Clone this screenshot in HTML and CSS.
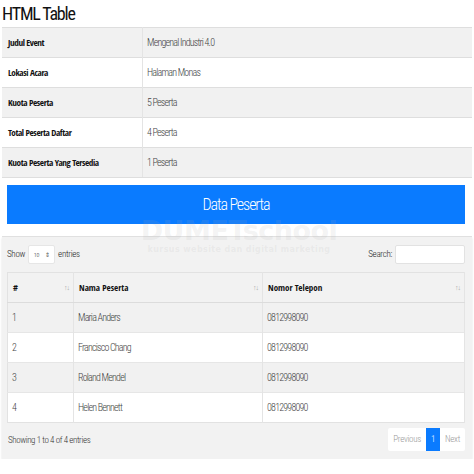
FILE: index.html
```html
<!DOCTYPE html>
<html>
<head>
<meta charset="utf-8">
<link rel="stylesheet" href="styles.css">
</head>
<body>
<div class="page">
  <h1 class="title">HTML Table</h1>
  <table class="info">
    <tr><th>Judul Event</th><td>Mengenal Industri 4.0</td></tr>
    <tr><th>Lokasi Acara</th><td>Halaman Monas</td></tr>
    <tr><th>Kuota Peserta</th><td>5 Peserta</td></tr>
    <tr><th>Total Peserta Daftar</th><td>4 Peserta</td></tr>
    <tr><th>Kuota Peserta Yang Tersedia</th><td>1 Peserta</td></tr>
  </table>
  <div class="card">
    <div class="card-head">
      <div class="banner">Data Peserta</div>
    </div>
    <div class="card-body">
      <div class="controls">
        <label class="length">Show <span class="select">10 <span class="caret">&#8661;</span></span> entries</label>
        <label class="search">Search: <span class="input"></span></label>
      </div>
      <table class="data">
        <thead>
          <tr>
            <th class="c1"># <span class="sort">&#8593;&#8595;</span></th>
            <th class="c2">Nama Peserta <span class="sort">&#8593;&#8595;</span></th>
            <th class="c3">Nomor Telepon <span class="sort">&#8593;&#8595;</span></th>
          </tr>
        </thead>
        <tbody>
          <tr class="odd"><td>1</td><td>Maria Anders</td><td>0812998090</td></tr>
          <tr><td>2</td><td>Francisco Chang</td><td>0812998090</td></tr>
          <tr class="odd"><td>3</td><td>Roland Mendel</td><td>0812998090</td></tr>
          <tr><td>4</td><td>Helen Bennett</td><td>0812998090</td></tr>
        </tbody>
      </table>
      <div class="footer">
        <span class="info-text">Showing 1 to 4 of 4 entries</span>
        <div class="pager">
          <span class="pg">Previous</span>
          <span class="pg active">1</span>
          <span class="pg">Next</span>
        </div>
      </div>
    </div>
    <div class="watermark">
      <div class="wm-big">DUMETschool</div>
      <div class="wm-small">kursus website dan digital marketing</div>
    </div>
  </div>
</div>
</body>
</html>
```
FILE: styles.css
```css
body {
  margin: 0;
  background: #fff;
  font-family: "Roboto Condensed", "Liberation Sans", sans-serif;
  font-weight: 300;
  color: #212529;
}
.page {
  padding: 0 2px;
  width: 470px;
}
.title {
  margin: 0;
  font-size: 18px;
  font-weight: 400;
  line-height: 27px;
  height: 27px;
  color: #111;
  letter-spacing: -1.2px;
}
.info {
  width: 470px;
  border-collapse: collapse;
  font-size: 10px;
}
.info th, .info td {
  height: 29px;
  padding: 0 5px 0 6px;
  border-top: 1px solid #dedede;
  text-align: left;
  vertical-align: middle;
}
.info th {
  width: 129px;
  font-family: "Open Sans Condensed", "Roboto Condensed", sans-serif;
  font-weight: 700;
  font-size: 9.2px;
  letter-spacing: -0.4px;
  border-right: 1px solid #e4e4e4;
  color: #111;
}
.info td {
  padding-left: 4px;
  color: #444;
  letter-spacing: -0.8px;
}
.info tr:nth-child(odd) { background: #f1f1f1; }
.info tr:last-child th, .info tr:last-child td { border-bottom: 1px solid #dedede; }
.card {
  position: relative;
}
.card-head {
  padding: 7px 7px 12px 5px;
  border-bottom: 1px solid #e2e2e2;
}
.banner {
  background: #0a7bff;
  color: #fff;
  height: 39px;
  line-height: 39px;
  text-align: center;
  font-size: 16px;
  letter-spacing: -1.1px;
}
.card-body {
  background: #f2f2f2;
  padding: 7px 7px 8px 5px;
  box-shadow: 0 1px 2px rgba(0,0,0,0.12);
  font-size: 9px;
}
.controls {
  display: flex;
  justify-content: space-between;
  align-items: center;
  height: 20px;
  margin-bottom: 8px;
}
.length, .search {
  display: flex;
  align-items: center;
  gap: 3px;
  color: #222;
  letter-spacing: -0.3px;
}
.select {
  display: inline-flex;
  align-items: center;
  justify-content: center;
  gap: 5px;
  width: 27px;
  height: 19px;
  background: #fff;
  border: 1px solid #e6e6e6;
  border-radius: 2px;
  font-size: 6px;
  letter-spacing: 0;
  box-sizing: border-box;
}
.caret { font-size: 6px; color: #555; }
.input {
  display: inline-block;
  width: 70px;
  height: 19px;
  background: #fff;
  border: 1px solid #e2e2e2;
  border-radius: 2px;
  box-sizing: border-box;
}
.data {
  width: 458px;
  border-collapse: collapse;
  border: 1px solid #e2e2e2;
  font-size: 10px;
}
.data th, .data td {
  text-align: left;
  padding: 0 5px;
  vertical-align: middle;
  border-right: 1px solid #e4e4e4;
}
.data th {
  height: 29px;
  font-family: "Open Sans Condensed", "Roboto Condensed", sans-serif;
  font-weight: 700;
  font-size: 9px;
  color: #111;
  border-bottom: 1px solid #dcdcdc;
  position: relative;
}
.data td {
  height: 29px;
  padding-left: 4px;
  color: #444;
  letter-spacing: -0.8px;
  border-top: 1px solid #e6e6e6;
}
.data tbody tr { background: #fff; }
.data tbody tr.odd { background: #f1f1f1; }
.c1 { width: 55px; }
.c2 { width: 178px; }
.sort {
  position: absolute;
  right: 4px;
  top: 50%;
  transform: translateY(-50%);
  font-family: "Roboto Condensed", sans-serif;
  font-weight: 300;
  font-size: 7px;
  color: #aaa;
  letter-spacing: -1px;
}
.footer {
  display: flex;
  justify-content: space-between;
  align-items: center;
  margin-top: 5px;
  height: 23px;
}
.info-text {
  color: #333;
  padding-left: 1px;
  letter-spacing: -0.4px;
}
.pager {
  display: flex;
  background: #fff;
  border-radius: 2px;
}
.pg {
  height: 23px;
  line-height: 23px;
  padding: 0 5px;
  color: #999;
  letter-spacing: -0.3px;
}
.pg.active {
  background: #0a7bff;
  color: #fff;
  padding: 0 5px;
}
.watermark {
  position: absolute;
  left: 138px;
  top: 40px;
  width: 198px;
  text-align: center;
  pointer-events: none;
  font-family: "DejaVu Sans", sans-serif;
  font-weight: bold;
}
.wm-big {
  font-size: 27px;
  color: rgba(170,170,170,0.15);
  line-height: 26px;
  letter-spacing: -0.5px;
}
.wm-small {
  font-size: 8px;
  color: rgba(170,170,170,0.14);
  line-height: 12px;
  letter-spacing: 0.4px;
}
```
